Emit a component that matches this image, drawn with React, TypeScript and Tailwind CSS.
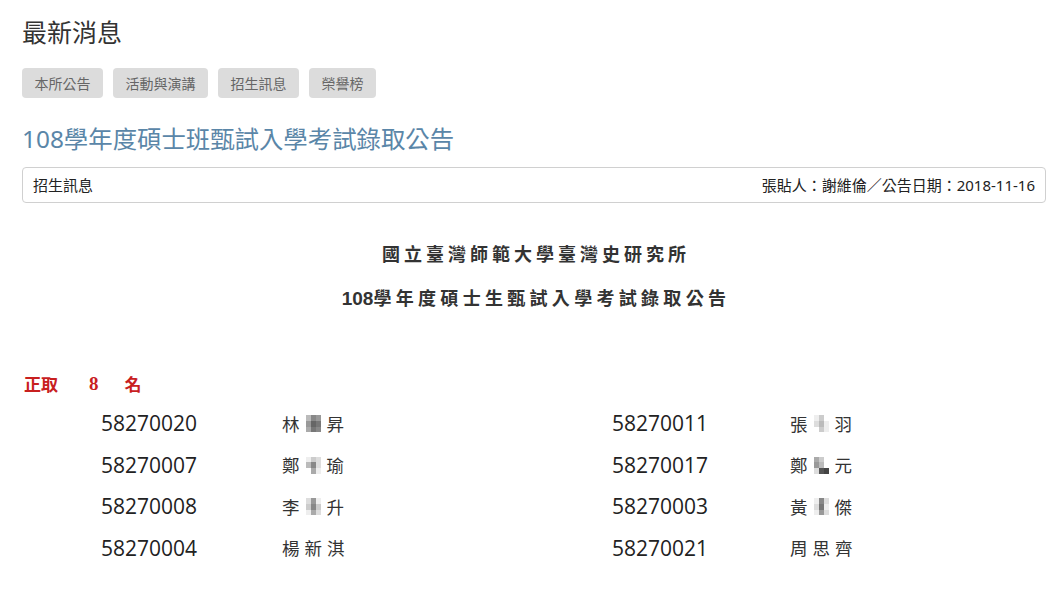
import React from 'react';

const tabs = ['本所公告', '活動與演講', '招生訊息', '榮譽榜'];

// 打了馬賽克的名字中間字
const mosaics: Record<string, string[]> = {
  a: ['bg-[#bbb]', 'bg-[#888]', 'bg-[#999]', 'bg-[#999]', 'bg-[#666]', 'bg-[#777]', 'bg-[#aaa]', 'bg-[#777]', 'bg-[#888]'],
  b: ['bg-[#eee]', 'bg-[#ccc]', 'bg-[#ddd]', 'bg-[#bbb]', 'bg-[#888]', 'bg-[#ddd]', 'bg-[#fff]', 'bg-[#aaa]', 'bg-[#eee]'],
  c: ['bg-[#ddd]', 'bg-[#999]', 'bg-[#eee]', 'bg-[#ccc]', 'bg-[#888]', 'bg-[#ccc]', 'bg-[#eee]', 'bg-[#aaa]', 'bg-[#ddd]'],
  d: ['bg-[#eee]', 'bg-[#ccc]', 'bg-[#fff]', 'bg-[#ddd]', 'bg-[#bbb]', 'bg-[#eee]', 'bg-[#fff]', 'bg-[#ccc]', 'bg-[#eee]'],
  e: ['bg-[#aaa]', 'bg-[#ccc]', 'bg-[#fff]', 'bg-[#999]', 'bg-[#bbb]', 'bg-[#fff]', 'bg-[#ddd]', 'bg-[#555]', 'bg-[#444]'],
  f: ['bg-[#eee]', 'bg-[#888]', 'bg-[#ddd]', 'bg-[#ddd]', 'bg-[#777]', 'bg-[#eee]', 'bg-[#eee]', 'bg-[#999]', 'bg-[#ddd]'],
};

type Person = { id: string; first: string; mid: string; last: string };

const left: Person[] = [
  { id: '58270020', first: '林', mid: 'a', last: '昇' },
  { id: '58270007', first: '鄭', mid: 'b', last: '瑜' },
  { id: '58270008', first: '李', mid: 'c', last: '升' },
  { id: '58270004', first: '楊', mid: '新', last: '淇' },
];
const right: Person[] = [
  { id: '58270011', first: '張', mid: 'd', last: '羽' },
  { id: '58270017', first: '鄭', mid: 'e', last: '元' },
  { id: '58270003', first: '黃', mid: 'f', last: '傑' },
  { id: '58270021', first: '周', mid: '思', last: '齊' },
];

const Mosaic = ({ k }: { k: string }) => (
  <span className="grid grid-cols-3 w-[15px] h-[17px] mx-[1px]">
    {mosaics[k].map((c, i) => (
      <span key={i} className={c} />
    ))}
  </span>
);

const Name = ({ p }: { p: Person }) => (
  <span className="flex items-center gap-[5px] text-[17.5px] leading-[22px] text-[#333]">
    <span>{p.first}</span>
    {mosaics[p.mid] ? <Mosaic k={p.mid} /> : <span>{p.mid}</span>}
    <span>{p.last}</span>
  </span>
);

export default function App() {
  return (
    <div className="w-[1060px] h-[596px] bg-white overflow-hidden pl-[22px] pr-[14px] pt-[17px] font-['Noto_Sans','Noto_Sans_CJK_TC',sans-serif]">
      <h1 className="text-[25px] leading-[30px] text-[#333]">最新消息</h1>

      <div className="flex gap-[10px] mt-[21px]">
        {tabs.map((t) => (
          <div
            key={t}
            className="h-[30px] px-[12.5px] flex items-center bg-[#dcdcdc] rounded text-[14px] text-[#666]"
          >
            {t}
          </div>
        ))}
      </div>

      <h2 className="mt-[25px] text-[24.4px] leading-[32px] text-[#5a86a8]">108學年度碩士班甄試入學考試錄取公告</h2>

      <div className="mt-[12px] h-[36px] border border-[#d0d0d0] rounded flex items-center justify-between px-[10px] text-[15px] text-[#222]">
        <span>招生訊息</span>
        <span>張貼人：謝維倫／公告日期：2018-11-16</span>
      </div>

      <div className="font-['Noto_Sans_CJK_TC',serif] font-bold text-[#333] text-[18px] leading-[28px] text-center pl-[4px]">
        <p className="mt-[36px] tracking-[4px]">國立臺灣師範大學臺灣史研究所</p>
        <p className="mt-[16px]">
          <span className="font-['Liberation_Sans',sans-serif] text-[19px]">108</span>
          <span className="tracking-[4.3px]">學年度碩士生甄試入學考試錄取公告</span>
        </p>
      </div>

      <div className="mt-[59px] pl-[2px] h-[24px] flex items-center font-['Noto_Sans_CJK_TC',serif] font-bold text-[17px] text-[#c8201f]">
        <span>正取</span>
        <span className="ml-[31px] font-['Liberation_Serif',serif] text-[19px]">8</span>
        <span className="ml-[26px]">名</span>
      </div>

      <div className="mt-[7px] grid grid-cols-2">
        {[left, right].map((col, ci) => (
          <div key={ci} className={ci === 0 ? 'pl-[79px]' : 'pl-[78px]'}>
            {col.map((p) => (
              <div key={p.id} className="h-[41.5px] flex items-center">
                <span className={`${ci === 0 ? 'w-[181px]' : 'w-[178px]'} font-['Open_Sans',sans-serif] text-[21px] text-[#222]`}>
                  {p.id}
                </span>
                <Name p={p} />
              </div>
            ))}
          </div>
        ))}
      </div>
    </div>
  );
}
